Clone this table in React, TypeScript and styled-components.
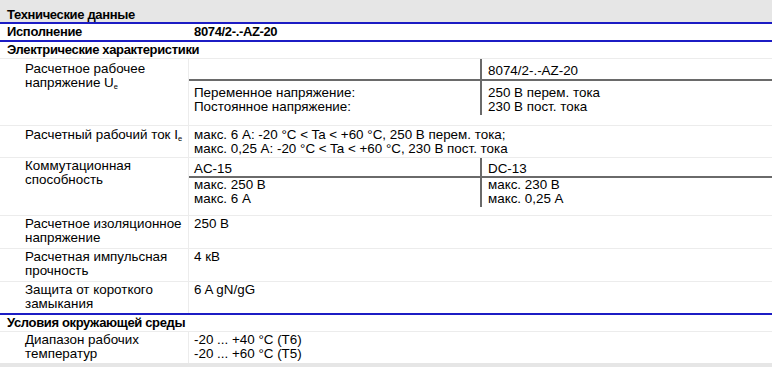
import React from "react";
import styled, { createGlobalStyle } from "styled-components";

const Global = createGlobalStyle`
  html, body { margin: 0; padding: 0; background: #fff; }
  body { font-family: "Liberation Sans", Arial, sans-serif; color: #000; }
`;

const Page = styled.div`
  width: 772px;
  font-size: 13.4px;
  line-height: 14px;
`;

const Caption = styled.div`
  height: 22px;
  box-sizing: border-box;
  padding: 7px 0 0 7px;
  background: #e6e6e6;
  font-size: 13px;
  font-weight: bold;
  line-height: 16px;
  letter-spacing: -0.35px;
`;

const BlueRule = styled.div`
  height: 2px;
  background: #1c1cc4;
`;

const HeadRow = styled.div`
  display: grid;
  grid-template-columns: 188px 1fr;
  height: 16px;
  line-height: 16px;
  font-size: 13px;
  font-weight: bold;
  letter-spacing: -0.35px;
  & > div:first-child { padding-left: 7px; }
  & > div:last-child { padding-left: 6px; }
`;

const Section = styled.div<{ $border?: boolean }>`
  height: 16px;
  line-height: 16px;
  padding-left: 7px;
  font-size: 13px;
  font-weight: bold;
  letter-spacing: -0.35px;
  border-bottom: ${(p) => (p.$border ? "1px solid #ececec" : "none")};
`;

const SpecRow = styled.div<{ $h: number; $last?: boolean }>`
  display: grid;
  grid-template-columns: 188px 1fr;
  height: ${(p) => p.$h}px;
  border-bottom: ${(p) => (p.$last ? "none" : "1px solid #ececec")};
`;

const Label = styled.div<{ $pt?: number }>`
  padding: ${(p) => p.$pt ?? 2}px 4px 0 25px;
`;

const Value = styled.div<{ $pt?: number; $flush?: boolean }>`
  border-left: 1px solid #ececec;
  padding: ${(p) => (p.$flush ? 0 : p.$pt ?? 2)}px 0 0 ${(p) => (p.$flush ? 0 : 5)}px;
`;

const SubTable = styled.div`
  display: grid;
  grid-template-columns: 291px 1fr;
`;

const SubHead = styled.div<{ $h: number; $pt: number; $right?: boolean }>`
  height: ${(p) => p.$h}px;
  box-sizing: border-box;
  padding: ${(p) => p.$pt}px 0 0 ${(p) => (p.$right ? 6 : 5)}px;
  border-bottom: 2px solid #6a6a6a;
  border-left: ${(p) => (p.$right ? "2px solid #6a6a6a" : "none")};
`;

const SubBody = styled.div<{ $h: number; $pt: number; $right?: boolean }>`
  height: ${(p) => p.$h}px;
  box-sizing: border-box;
  padding: ${(p) => p.$pt}px 0 0 ${(p) => (p.$right ? 6 : 5)}px;
  border-left: ${(p) => (p.$right ? "2px solid #6a6a6a" : "none")};
`;

const Sub = styled.sub`
  font-size: 7.5px;
  line-height: 0;
  vertical-align: -2px;
`;

const EnvBand = styled.div`
  height: 4px;
  background: #e6e6e6;
`;

export default function App() {
  return (
    <>
      <Global />
      <Page>
        <Caption>Технические данные</Caption>
        <BlueRule />
        <HeadRow>
          <div>Исполнение</div>
          <div>8074/2-.-AZ-20</div>
        </HeadRow>
        <BlueRule />
        <Section $border>Электрические характеристики</Section>

        <SpecRow $h={66}>
          <Label $pt={3}>
            Расчетное рабочее
            <br />
            напряжение U<Sub>e</Sub>
          </Label>
          <Value $flush>
            <SubTable>
              <SubHead $h={22} $pt={5} />
              <SubHead $h={22} $pt={5} $right>
                8074/2-.-AZ-20
              </SubHead>
              <SubBody $h={34} $pt={5}>
                Переменное напряжение:
                <br />
                Постоянное напряжение:
              </SubBody>
              <SubBody $h={34} $pt={5} $right>
                250 В перем. тока
                <br />
                230 В пост. тока
              </SubBody>
            </SubTable>
          </Value>
        </SpecRow>

        <SpecRow $h={31}>
          <Label>
            Расчетный рабочий ток I<Sub>e</Sub>
          </Label>
          <Value>
            макс. 6 A: -20 °C &lt; Ta &lt; +60 °C, 250 В перем. тока;
            <br />
            макс. 0,25 A: -20 °C &lt; Ta &lt; +60 °C, 230 В пост. тока
          </Value>
        </SpecRow>

        <SpecRow $h={57}>
          <Label $pt={1}>
            Коммутационная
            <br />
            способность
          </Label>
          <Value $flush>
            <SubTable>
              <SubHead $h={20} $pt={4}>AC-15</SubHead>
              <SubHead $h={20} $pt={4} $right>
                DC-13
              </SubHead>
              <SubBody $h={29} $pt={0}>
                макс. 250 В
                <br />
                макс. 6 A
              </SubBody>
              <SubBody $h={29} $pt={0} $right>
                макс. 230 В
                <br />
                макс. 0,25 A
              </SubBody>
            </SubTable>
          </Value>
        </SpecRow>

        <SpecRow $h={32}>
          <Label $pt={1}>
            Расчетное изоляционное
            <br />
            напряжение
          </Label>
          <Value $pt={1}>250 В</Value>
        </SpecRow>

        <SpecRow $h={32}>
          <Label $pt={1}>
            Расчетная импульсная
            <br />
            прочность
          </Label>
          <Value $pt={1}>4 кВ</Value>
        </SpecRow>

        <SpecRow $h={31} $last>
          <Label $pt={1}>
            Защита от короткого
            <br />
            замыкания
          </Label>
          <Value $pt={1}>6 A gN/gG</Value>
        </SpecRow>

        <BlueRule />
        <Section $border>Условия окружающей среды</Section>

        <SpecRow $h={31} $last>
          <Label $pt={1}>
            Диапазон рабочих
            <br />
            температур
          </Label>
          <Value $pt={1}>
            -20 ... +40 °C (T6)
            <br />
            -20 ... +60 °C (T5)
          </Value>
        </SpecRow>
        <EnvBand />
      </Page>
    </>
  );
}
